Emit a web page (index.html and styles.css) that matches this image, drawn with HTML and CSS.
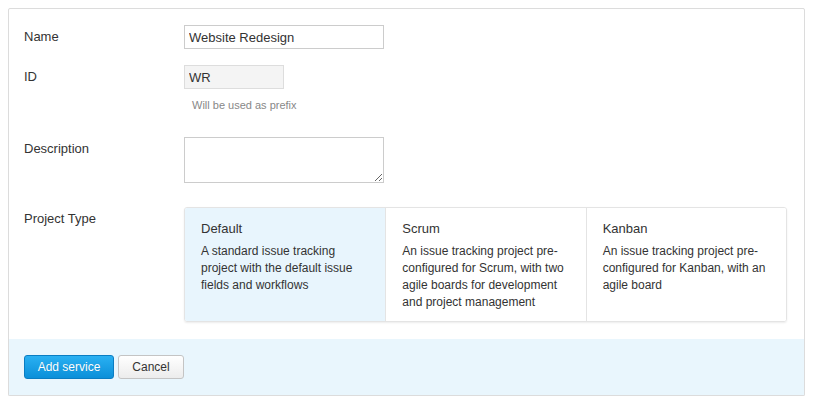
FILE: index.html
```html
<!DOCTYPE html>
<html>
<head>
<meta charset="utf-8">
<link rel="stylesheet" href="styles.css">
</head>
<body>
<div class="panel">
  <div class="form">
    <div class="row">
      <label class="label">Name</label>
      <div class="field"><input class="input" type="text" value="Website Redesign"></div>
    </div>
    <div class="row row-id">
      <label class="label">ID</label>
      <div class="field">
        <input class="input input-short input-muted" type="text" value="WR">
        <div class="hint">Will be used as prefix</div>
      </div>
    </div>
    <div class="row row-desc">
      <label class="label">Description</label>
      <div class="field"><textarea class="textarea"></textarea></div>
    </div>
    <div class="row row-type">
      <label class="label">Project Type</label>
      <div class="field">
        <div class="types">
          <div class="type selected">
            <div class="type-title">Default</div>
            <div class="type-desc">A standard issue tracking project with the default issue fields and workflows</div>
          </div>
          <div class="type">
            <div class="type-title">Scrum</div>
            <div class="type-desc">An issue tracking project pre-configured for Scrum, with two agile boards for development and project management</div>
          </div>
          <div class="type">
            <div class="type-title">Kanban</div>
            <div class="type-desc">An issue tracking project pre-configured for Kanban, with an agile board</div>
          </div>
        </div>
      </div>
    </div>
  </div>
  <div class="footer">
    <button class="btn btn-primary">Add service</button>
    <button class="btn btn-default">Cancel</button>
  </div>
</div>
</body>
</html>
```

FILE: styles.css
```css
html, body {
  background: #ffffff;
}
body {
  margin: 8px;
  font-family: Arial, "Liberation Sans", sans-serif;
  font-size: 13px;
  color: #333333;
}
.panel {
  border: 1px solid #dcdcdc;
  border-radius: 2px;
  box-shadow: 0 1px 2px rgba(0, 0, 0, 0.12);
  background: #ffffff;
}
.form {
  padding: 16px 15px 17px 15px;
}
.row {
  display: grid;
  grid-template-columns: 160px 1fr;
  align-items: start;
}
.row-id {
  margin-top: 16px;
}
.row-desc {
  margin-top: 24px;
}
.row-type {
  margin-top: 24px;
}
.label {
  line-height: 24px;
  font-size: 13px;
  color: #333333;
}
.field {
  display: flex;
  flex-direction: column;
  align-items: flex-start;
}
.input {
  box-sizing: border-box;
  width: 200px;
  height: 24px;
  border: 1px solid #cccccc;
  padding: 0 4px;
  margin: 0;
  font-family: Arial, "Liberation Sans", sans-serif;
  font-size: 13px;
  color: #333333;
  background: #ffffff;
  outline: none;
}
.input-short {
  width: 100px;
}
.input-muted {
  background: #f4f4f4;
  border-color: #dddddd;
}
.hint {
  margin-top: 9px;
  padding-left: 8px;
  font-size: 11px;
  line-height: 15px;
  color: #888888;
}
.textarea {
  box-sizing: border-box;
  width: 200px;
  height: 46px;
  border: 1px solid #cccccc;
  margin: 0;
  padding: 3px 4px;
  font-family: Arial, "Liberation Sans", sans-serif;
  font-size: 13px;
  outline: none;
}
.types {
  display: grid;
  grid-template-columns: repeat(3, 1fr);
  width: 603px;
  box-sizing: border-box;
  border: 1px solid #e4e4e4;
  border-radius: 3px;
  box-shadow: 0 1px 2px rgba(0, 0, 0, 0.08);
  overflow: hidden;
}
.type {
  padding: 12px 12px 10px 16px;
  border-left: 1px solid #e4e4e4;
  background: #ffffff;
}
.type:first-child {
  border-left: none;
}
.type.selected {
  background: #e8f5fd;
}
.type-title {
  font-size: 13px;
  line-height: 18px;
  color: #333333;
}
.type-desc {
  margin-top: 5px;
  font-size: 12px;
  line-height: 17px;
  color: #333333;
}
.footer {
  background: #e9f6fd;
  padding: 16px 15px;
  display: flex;
  gap: 4px;
}
.btn {
  box-sizing: border-box;
  height: 24px;
  padding: 0;
  white-space: nowrap;
  font-family: Arial, "Liberation Sans", sans-serif;
  font-size: 12px;
  border-radius: 3px;
  cursor: pointer;
}
.btn-primary {
  width: 90px;
  color: #ffffff;
  background: linear-gradient(#2ab0f2, #0b8fd9);
  border: 1px solid #0a7dc2;
  text-shadow: 0 0 1px rgba(0, 0, 0, 0.15);
}
.btn-default {
  width: 66px;
  color: #333333;
  background: linear-gradient(#ffffff, #ececec);
  border: 1px solid #c4c4c4;
}
```
